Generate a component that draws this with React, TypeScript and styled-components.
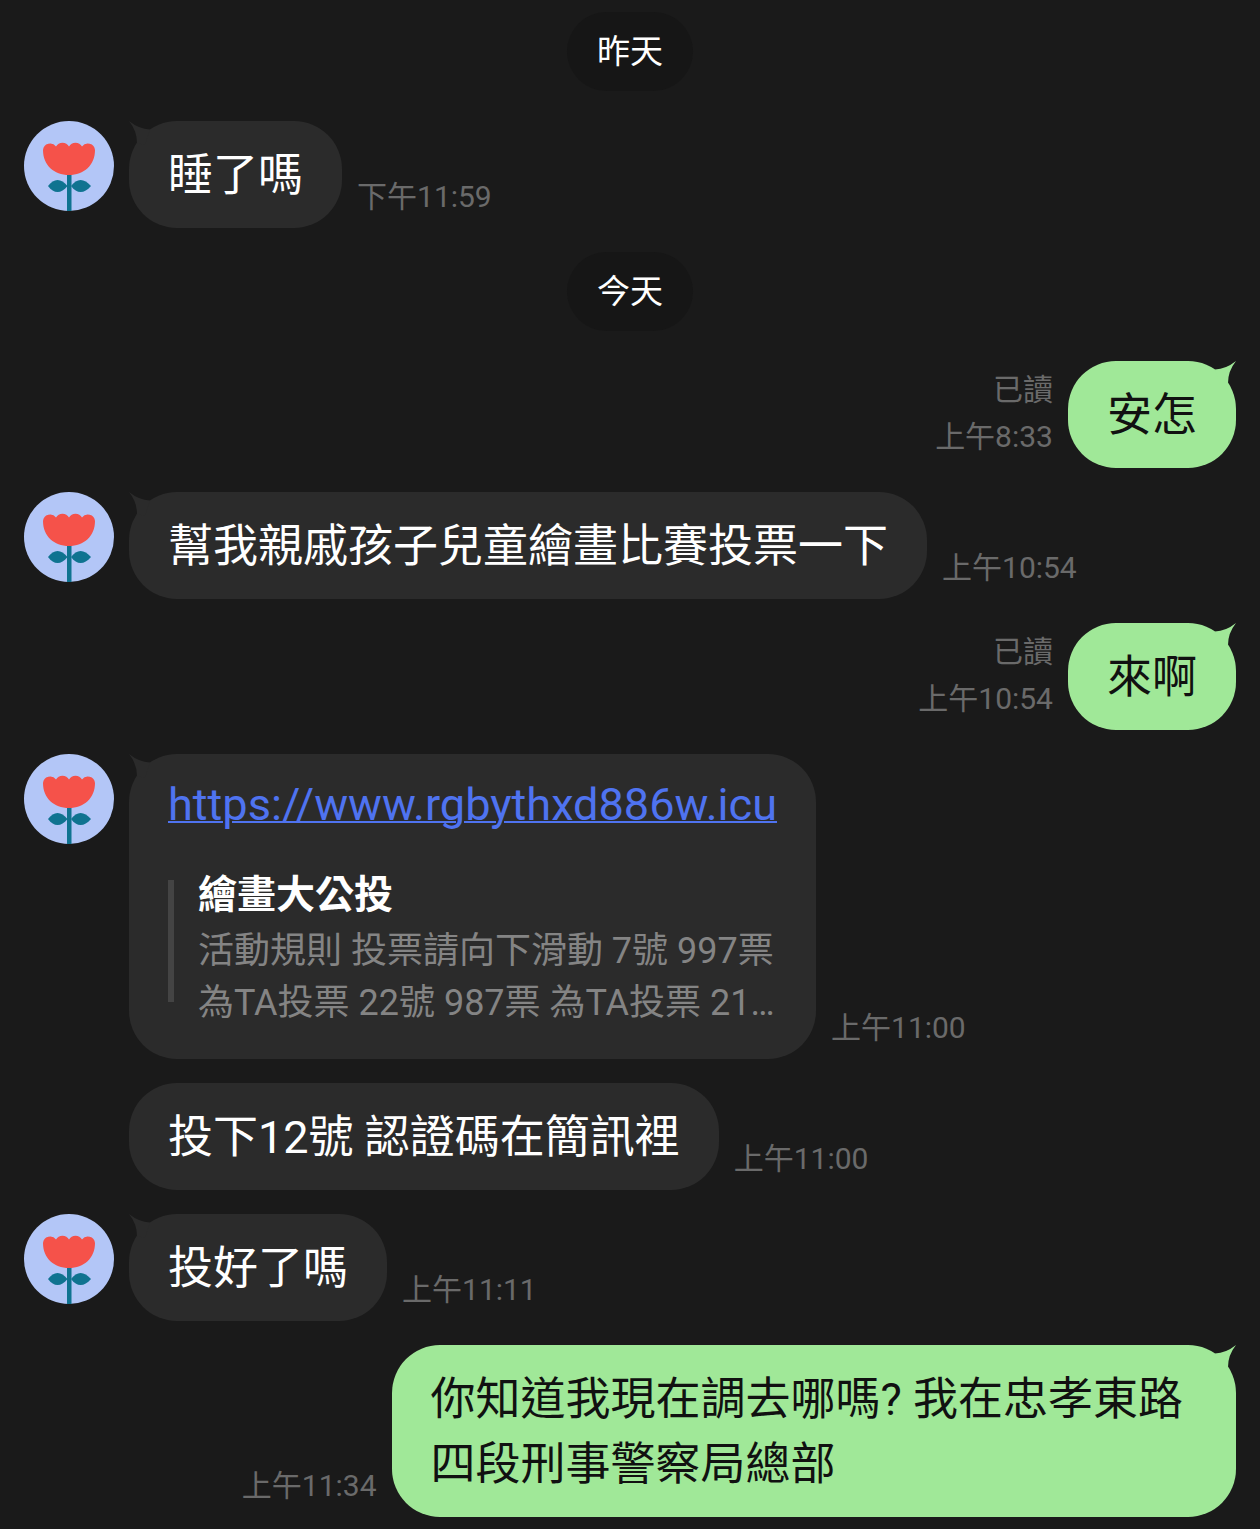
import React from 'react'
import styled, { createGlobalStyle } from 'styled-components'

const GlobalStyle = createGlobalStyle`
  html, body {
    margin: 0;
    padding: 0;
    background: #1a1a1a;
  }
  body {
    font-family: Roboto, 'Noto Sans CJK TC', sans-serif;
  }
`

const Avatar = () => (
  <AvatarSvg viewBox="0 0 90 90">
    <circle cx="45" cy="45" r="45" fill="#b3c6f7" />
    <rect x="43" y="52" width="4.5" height="38" fill="#0f7390" />
    <path d="M43.5 65 C37 57 30 57 24 65 C30 73 37 73 43.5 65Z" fill="#0f7390" />
    <path d="M47 65 C53 57 60 57 67 65 C60 73 53 73 47 65Z" fill="#0f7390" />
    <path
      d="M19 29 A7.2 7.2 0 0 1 32 25.5 A7.4 7.4 0 0 1 45 25.5 A7.4 7.4 0 0 1 58 25.5 A7.2 7.2 0 0 1 71 29 C71 44 60 54 45 54 C30 54 19 44 19 29Z"
      fill="#f5524a"
    />
  </AvatarSvg>
)

const Tail = ({ out }: { out?: boolean }) => (
  <TailSvg $out={out} viewBox="0 0 28 26">
    <path d="M28 0 Q18 8 7 8.5 L12 24 L20 22 Q20 10 28 0Z" fill={out ? '#a0e898' : '#2b2b2b'} />
  </TailSvg>
)

interface IncomingProps {
  time: string
  avatar?: boolean
  children: React.ReactNode
}

const Incoming: React.FC<IncomingProps> = ({ time, avatar = true, children }) => (
  <InRow>
    <AvatarSlot>{avatar && <Avatar />}</AvatarSlot>
    <Bubble>
      {avatar && <Tail />}
      {children}
    </Bubble>
    <Time>{time}</Time>
  </InRow>
)

interface OutgoingProps {
  time: string
  read?: boolean
  wrapped?: boolean
  children: React.ReactNode
}

const Outgoing: React.FC<OutgoingProps> = ({ time, read, wrapped, children }) => (
  <OutRow>
    <Meta>
      {read && <ReadMark>已讀</ReadMark>}
      <MetaTime>{time}</MetaTime>
    </Meta>
    <Bubble $out $wrapped={wrapped}>
      <Tail out />
      {children}
    </Bubble>
  </OutRow>
)

export default function App() {
  return (
    <Page>
      <GlobalStyle />
      <DatePill>昨天</DatePill>
      <Incoming time="下午11:59">睡了嗎</Incoming>
      <DatePill>今天</DatePill>
      <Outgoing time="上午8:33" read>安怎</Outgoing>
      <Incoming time="上午10:54">幫我親戚孩子兒童繪畫比賽投票一下</Incoming>
      <Outgoing time="上午10:54" read>來啊</Outgoing>
      <Incoming time="上午11:00">
        <LinkText href="#">https://www.rgbythxd886w.icu</LinkText>
        <Preview>
          <PreviewBar />
          <PreviewBody>
            <PreviewTitle>繪畫大公投</PreviewTitle>
            <PreviewText>
              活動規則 投票請向下滑動 7號 997票
              <br />
              為TA投票 22號 987票 為TA投票 21…
            </PreviewText>
          </PreviewBody>
        </Preview>
      </Incoming>
      <Incoming time="上午11:00" avatar={false}>投下12號 認證碼在簡訊裡</Incoming>
      <Incoming time="上午11:11">投好了嗎</Incoming>
      <Outgoing time="上午11:34" wrapped>
        你知道我現在調去哪嗎? 我在忠孝東路
        <br />
        四段刑事警察局總部
      </Outgoing>
    </Page>
  )
}

const Page = styled.div`
  display: flex;
  flex-direction: column;
  gap: 24px;
  width: 1260px;
  height: 1529px;
  box-sizing: border-box;
  padding: 12px 24px;
  overflow: hidden;
  background: #1a1a1a;
`

const DatePill = styled.div`
  align-self: center;
  padding: 0 30px;
  margin-bottom: 6px;
  height: 79px;
  line-height: 79px;
  border-radius: 40px;
  background: #161616;
  color: #ffffff;
  font-size: 33px;
`

const InRow = styled.div`
  display: flex;
  align-items: flex-start;
`

const OutRow = styled.div`
  display: flex;
  justify-content: flex-end;
  align-items: flex-end;
  gap: 15px;
`

const AvatarSlot = styled.div`
  flex: none;
  width: 90px;
  margin-right: 15px;
`

const AvatarSvg = styled.svg`
  display: block;
  width: 90px;
  height: 90px;
`

const Bubble = styled.div<{ $out?: boolean; $wrapped?: boolean }>`
  position: relative;
  padding: 22px ${({ $wrapped }) => ($wrapped ? '53px' : '39px')} 20px 39px;
  border-radius: 48px;
  background: ${({ $out }) => ($out ? '#a0e898' : '#2b2b2b')};
  color: ${({ $out }) => ($out ? '#111111' : '#ffffff')};
  font-size: 45px;
  line-height: 65px;
  white-space: nowrap;
`

const TailSvg = styled.svg<{ $out?: boolean }>`
  position: absolute;
  top: 0;
  width: 28px;
  height: 26px;
  ${({ $out }) => ($out ? 'right: 0;' : 'left: 0; transform: scaleX(-1);')}
`

const Time = styled.div`
  align-self: flex-end;
  margin-left: 15px;
  padding-bottom: 13px;
  color: #6a6a6a;
  font-size: 30px;
  line-height: 36px;
  white-space: nowrap;
`

const Meta = styled.div`
  display: flex;
  flex-direction: column;
  align-items: flex-end;
  gap: 11px;
  padding-bottom: 13px;
  color: #6a6a6a;
  font-size: 30px;
  line-height: 36px;
`

const ReadMark = styled.div`
  white-space: nowrap;
`

const MetaTime = styled.div`
  white-space: nowrap;
`

const LinkText = styled.a`
  display: block;
  margin-top: -4px;
  color: #4f73f0;
  font-size: 45.1px;
  text-decoration: underline;
  text-decoration-thickness: 2px;
`

const Preview = styled.div`
  display: flex;
  gap: 24px;
  margin-top: 29px;
  padding-bottom: 10px;
`

const PreviewBar = styled.div`
  flex: none;
  width: 6px;
  height: 122px;
  margin-top: 14px;
  background: #444444;
`

const PreviewBody = styled.div`
  display: flex;
  flex-direction: column;
`

const PreviewTitle = styled.div`
  padding-top: 1px;
  margin-bottom: 2px;
  color: #ffffff;
  font-size: 39px;
  font-weight: 700;
  line-height: 56px;
`

const PreviewText = styled.div`
  color: #848484;
  font-size: 36px;
  line-height: 52px;
`
